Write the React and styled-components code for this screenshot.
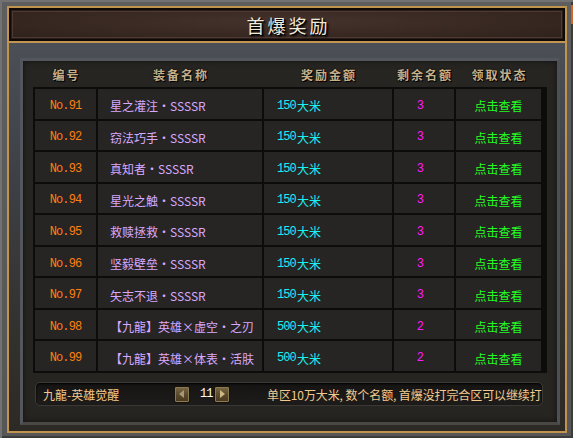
import React from 'react';
import styled, { createGlobalStyle } from 'styled-components';

const Global = createGlobalStyle`
  html, body { margin: 0; padding: 0; background: #555; }
  body { width: 573px; height: 438px; overflow: hidden; font-family: "Noto Sans CJK SC", "Noto Sans", sans-serif; }
  * { box-sizing: border-box; }
`;

const COLS = '61px 164px 128px 60px 85px';

const Root = styled.div`
  position: relative;
  width: 573px;
  height: 438px;
  padding: 6px 6px 5px 7px;
  background: linear-gradient(180deg, #5e5e5e, #565656);
  box-shadow: inset 2px 2px 0 #727272, inset -2px -2px 0 #3c3c3c;
`;

const CornerTab = styled.div`
  position: absolute;
  right: 0;
  top: 5px;
  width: 2px;
  height: 19px;
  background: #d4622c;
`;

const Frame = styled.div`
  height: 100%;
  border: 2px solid #c0934e;
  display: flex;
  flex-direction: column;
  background: #1a1614;
`;

const TitleBar = styled.div`
  height: 33px;
  flex: none;
  border: 2px solid #0f0a08;
  background: radial-gradient(ellipse at 50% 40%, #45322d 0%, #35261f 70%, #2d201b 100%);
  box-shadow: inset 0 0 0 1px #2a1c18, inset 0 0 0 2px #4c3a33;
  display: flex;
  align-items: center;
  justify-content: center;
`;

const Title = styled.h1`
  margin: 0;
  font-family: "Noto Sans CJK SC", sans-serif;
  font-weight: 400;
  font-size: 18px;
  letter-spacing: 3px;
  padding-left: 3px;
  color: #f1eadb;
  text-shadow: 1px 1px 0 #000, 2px 2px 2px #000;
`;

const GoldLine = styled.div`
  height: 2px;
  flex: none;
  background: #c29550;
`;

const Content = styled.div`
  flex: 1;
  padding: 15px 10px 6px 11px;
  background: linear-gradient(180deg, #4b4f56 0%, #3e4046 35%, #33312e 75%, #2d2925 100%);
  display: flex;
`;

const Panel = styled.div`
  flex: 1;
  border: 3px solid #53565c;
  border-bottom-color: #4a4845;
  border-right-color: #4d5055;
  background: #262522;
  box-shadow: inset 1px 1px 0 #1a1a19, inset 0 0 6px rgba(0,0,0,0.5);
  padding: 0 10px;
  display: flex;
  flex-direction: column;
`;

const HeaderRow = styled.div`
  height: 26px;
  display: grid;
  grid-template-columns: ${COLS};
  column-gap: 2px;
  padding: 0 2px;
  align-items: center;
`;

const HeadCell = styled.div`
  text-align: center;
  font-family: "Noto Sans CJK SC", sans-serif;
  font-weight: 700;
  font-size: 12px;
  letter-spacing: 2px;
  padding-left: 2px;
  color: #c6b08a;
  text-shadow: 1px 1px 0 #000, 0 0 2px #000;
`;

const Table = styled.div`
  height: 286px;
  display: grid;
  grid-template-columns: ${COLS};
  grid-template-rows: repeat(9, 1fr);
  gap: 2px;
  padding: 2px;
  background: #0c0c0b;
`;

const Cell = styled.div`
  background: #262523;
  display: flex;
  align-items: center;
  justify-content: ${p => (p.$align === 'left' ? 'flex-start' : 'center')};
  padding: 4px ${p => p.$pr || 0}px 0 ${p => p.$pl || 0}px;
  font-size: 12px;
  white-space: nowrap;
  color: ${p => p.$color};
  font-family: ${p => (p.$mono ? '"Liberation Mono", monospace' : '"Noto Sans CJK SC", sans-serif')};
  letter-spacing: ${p => (p.$mono ? '-0.9px' : '0')};
`;

const Digits = styled.span`
  font-family: "Liberation Mono", monospace;
  letter-spacing: -0.9px;
  margin-right: 1px;
`;

const BottomBar = styled.div`
  margin: 9px 4px 0 2px;
  height: 24px;
  border: 1px solid #3b3935;
  border-radius: 5px;
  background: linear-gradient(180deg, #151413, #1d1c1a);
  box-shadow: inset 0 1px 2px #000;
  display: flex;
  align-items: center;
  padding-left: 7px;
  font-size: 12px;
  color: #f2c88e;
  white-space: nowrap;
`;

const Label = styled.div`
  width: 131px;
  flex: none;
`;

const Pager = styled.div`
  display: flex;
  align-items: center;
  flex: none;
`;

const PageBtn = styled.button`
  width: 16px;
  height: 17px;
  padding: 0;
  border: 1px solid #17120a;
  border-radius: 2px;
  background: linear-gradient(180deg, #7b6a45 0%, #5a4a2b 50%, #463820 100%);
  box-shadow: inset 0 0 0 1px #8c7a52;
  display: flex;
  align-items: center;
  justify-content: center;
  cursor: pointer;
`;

const PageNum = styled.span`
  margin: 0 2px 0 10px;
  width: 12px;
  font-family: "Liberation Mono", monospace;
  font-size: 12px;
  letter-spacing: -1px;
  color: #ffffff;
`;

const Note = styled.div`
  margin-left: 37px;
  letter-spacing: -0.1px;
`;

const rows = [
  ['No.91', '星之灌注・SSSSR', '150', '3'],
  ['No.92', '窃法巧手・SSSSR', '150', '3'],
  ['No.93', '真知者・SSSSR', '150', '3'],
  ['No.94', '星光之触・SSSSR', '150', '3'],
  ['No.95', '救赎拯救・SSSSR', '150', '3'],
  ['No.96', '坚毅壁垒・SSSSR', '150', '3'],
  ['No.97', '矢志不退・SSSSR', '150', '3'],
  ['No.98', '【九龍】英雄×虚空・之刃', '500', '2'],
  ['No.99', '【九龍】英雄×体表・活肤', '500', '2'],
];

const Arrow = ({ dir, color }) => (
  <svg width="6" height="8" viewBox="0 0 6 8">
    {dir === 'left'
      ? <polygon points="5,0 5,8 0,4" fill={color} />
      : <polygon points="1,0 1,8 6,4" fill={color} />}
  </svg>
);

export default function App() {
  return (
    <Root>
      <Global />
      <CornerTab />
      <Frame>
        <TitleBar>
          <Title>首爆奖励</Title>
        </TitleBar>
        <GoldLine />
        <Content>
          <Panel>
            <HeaderRow>
              <HeadCell>编号</HeadCell>
              <HeadCell>装备名称</HeadCell>
              <HeadCell>奖励金额</HeadCell>
              <HeadCell>剩余名额</HeadCell>
              <HeadCell>领取状态</HeadCell>
            </HeaderRow>
            <Table>
              {rows.map(([no, name, amt, left]) => (
                <React.Fragment key={no}>
                  <Cell $color="#ff7f10" $mono>{no}</Cell>
                  <Cell $color="#d9a8ff" $align="left" $pl={12}>{name}</Cell>
                  <Cell $color="#19f0f5" $align="left" $pl={13}><Digits>{amt}</Digits>大米</Cell>
                  <Cell $color="#ff1aff" $mono $pr={8}>{left}</Cell>
                  <Cell $color="#22ff22">点击查看</Cell>
                </React.Fragment>
              ))}
            </Table>
            <BottomBar>
              <Label>九龍-英雄觉醒</Label>
              <Pager>
                <PageBtn aria-label="上一页"><Arrow dir="left" color="#a8987a" /></PageBtn>
                <PageNum>11</PageNum>
                <PageBtn aria-label="下一页"><Arrow dir="right" color="#cdb888" /></PageBtn>
              </Pager>
              <Note>单区10万大米, 数个名额, 首爆没打完合区可以继续打</Note>
            </BottomBar>
          </Panel>
        </Content>
      </Frame>
    </Root>
  );
}
